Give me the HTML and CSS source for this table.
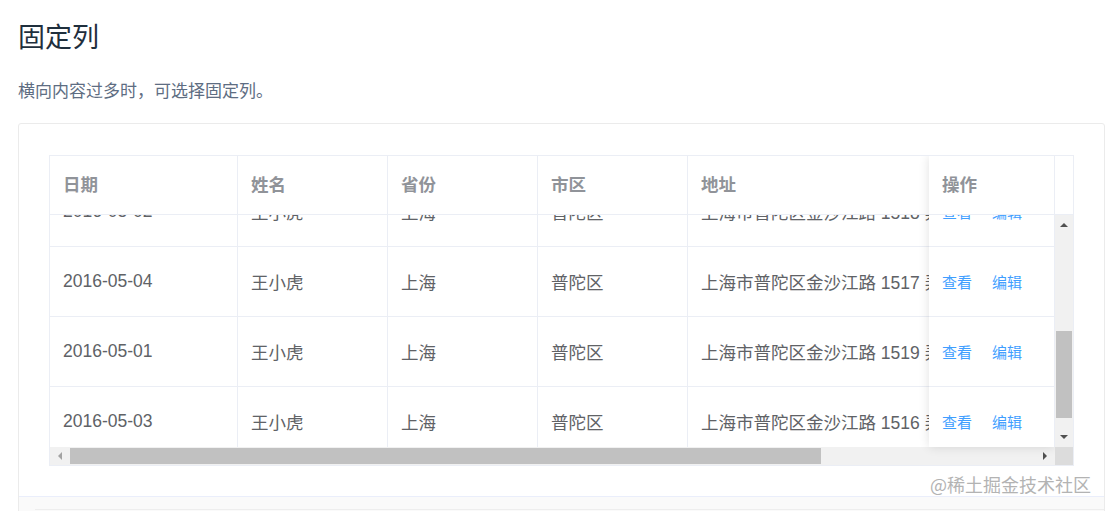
FILE: index.html
```html
<!DOCTYPE html>
<html lang="zh-CN">

<head>
    <meta charset="UTF-8">
    <meta name="viewport" content="width=device-width, initial-scale=1.0">
    <title>固定列</title>
    <link rel="stylesheet" href="styles.css">
</head>

<body>

    <div class="page">
        <h3 class="title">固定列</h3>
        <p class="desc">横向内容过多时，可选择固定列。</p>

        <div class="demo">
            <div class="demo-source">
                <div class="table">
                    <div class="thead">
                        <div class="thead-view">
                            <div class="th c-date">日期</div>
                            <div class="th c-name">姓名</div>
                            <div class="th c-prov">省份</div>
                            <div class="th c-city">市区</div>
                            <div class="th c-addr">地址</div>
                            <div class="th c-zip"></div>
                            <div class="th c-op"></div>
                        </div>
                        <div class="gutter"></div>
                    </div>

                    <div class="tbody">
                        <div class="tbody-view">
                            <div class="rows">
                                <div class="tr">
                                    <div class="td c-date">2016-05-02</div>
                                    <div class="td c-name">王小虎</div>
                                    <div class="td c-prov">上海</div>
                                    <div class="td c-city">普陀区</div>
                                    <div class="td c-addr">上海市普陀区金沙江路 1518 弄</div>
                                    <div class="td c-zip"></div>
                                    <div class="td c-op"></div>
                                </div>
                                <div class="tr">
                                    <div class="td c-date">2016-05-04</div>
                                    <div class="td c-name">王小虎</div>
                                    <div class="td c-prov">上海</div>
                                    <div class="td c-city">普陀区</div>
                                    <div class="td c-addr">上海市普陀区金沙江路 1517 弄</div>
                                    <div class="td c-zip"></div>
                                    <div class="td c-op"></div>
                                </div>
                                <div class="tr">
                                    <div class="td c-date">2016-05-01</div>
                                    <div class="td c-name">王小虎</div>
                                    <div class="td c-prov">上海</div>
                                    <div class="td c-city">普陀区</div>
                                    <div class="td c-addr">上海市普陀区金沙江路 1519 弄</div>
                                    <div class="td c-zip"></div>
                                    <div class="td c-op"></div>
                                </div>
                                <div class="tr">
                                    <div class="td c-date">2016-05-03</div>
                                    <div class="td c-name">王小虎</div>
                                    <div class="td c-prov">上海</div>
                                    <div class="td c-city">普陀区</div>
                                    <div class="td c-addr">上海市普陀区金沙江路 1516 弄</div>
                                    <div class="td c-zip"></div>
                                    <div class="td c-op"></div>
                                </div>
                            </div>
                        </div>
                        <div class="vscroll">
                            <div class="sb-btn"><span class="arrow-up"></span></div>
                            <div class="vtrack"><div class="vthumb"></div></div>
                            <div class="sb-btn"><span class="arrow-down"></span></div>
                        </div>
                    </div>

                    <div class="hbar">
                        <div class="hscroll">
                            <div class="sb-btn"><span class="arrow-left"></span></div>
                            <div class="htrack"><div class="hthumb"></div></div>
                            <div class="sb-btn"><span class="arrow-right"></span></div>
                        </div>
                        <div class="corner"></div>
                    </div>

                    <!-- fixed right column -->
                    <div class="fixed">
                        <div class="fixed-head">
                            <div class="th c-op">操作</div>
                        </div>
                        <div class="fixed-body">
                            <div class="rows">
                                <div class="tr">
                                    <div class="td c-op"><a class="link">查看</a><a class="link">编辑</a></div>
                                </div>
                                <div class="tr">
                                    <div class="td c-op"><a class="link">查看</a><a class="link">编辑</a></div>
                                </div>
                                <div class="tr">
                                    <div class="td c-op"><a class="link">查看</a><a class="link">编辑</a></div>
                                </div>
                                <div class="tr">
                                    <div class="td c-op"><a class="link">查看</a><a class="link">编辑</a></div>
                                </div>
                            </div>
                        </div>
                    </div>
                </div>
            </div>
            <div class="demo-meta">
                <div class="meta-line"></div>
            </div>
        </div>
    </div>

    <div class="watermark">@稀土掘金技术社区</div>

</body>

</html>
```

FILE: styles.css
```css
* {
    box-sizing: border-box;
}

html,
body {
    margin: 0;
    padding: 0;
    background: #fff;
}

body {
    position: relative;
    font-family: "Liberation Sans", "Noto Sans CJK SC", sans-serif;
    overflow: hidden;
}

.page {
    padding: 18px 0 0 18px;
    width: 1105px;
}

.title {
    margin: 0;
    font-size: 27px;
    font-weight: normal;
    line-height: 40px;
    color: #1f2f3d;
}

.desc {
    margin: 21px 0 0 0;
    font-size: 17px;
    line-height: 25px;
    color: #5e6d82;
}

.demo {
    margin-top: 19px;
    border: 1px solid #ebebeb;
    border-radius: 3px;
}

.demo-source {
    padding: 31px 30px 30px;
}

.demo-meta {
    border-top: 1px solid #eaeefb;
    background: #fafafa;
    height: 30px;
    padding: 12px 0 0 16px;
}

.meta-line {
    border-top: 1px solid #eeeeee;
}

/* table */
.table {
    position: relative;
    width: 1025px;
    border: 1px solid #ebeef5;
    font-size: 17.5px;
    color: #606266;
}

.thead {
    display: flex;
    height: 59px;
    border-bottom: 1px solid #ebeef5;
}

.thead-view,
.tbody-view {
    width: 1005px;
    overflow: hidden;
}

.thead-view {
    display: flex;
}

.gutter {
    width: 18px;
    background: #fff;
}

.th,
.td {
    flex: none;
    display: flex;
    align-items: center;
    padding-left: 13px;
    border-right: 1px solid #ebeef5;
    white-space: nowrap;
    overflow: hidden;
}

.th {
    padding-bottom: 4px;
    font-weight: bold;
    color: #909399;
}

.c-date { width: 188px; }
.c-name { width: 150px; }
.c-prov { width: 150px; }
.c-city { width: 150px; }
.c-addr { width: 375px; }
.c-zip { width: 150px; }
.c-op { width: 126px; }

.tbody {
    display: flex;
    height: 232px;
}

.rows {
    margin-top: -38px;
}

.tr {
    display: flex;
    height: 70px;
    border-bottom: 1px solid #ebeef5;
}

.link {
    color: #409eff;
    font-size: 15px;
    cursor: pointer;
}

.link + .link {
    margin-left: 20px;
}

/* fixed column */
.fixed {
    position: absolute;
    top: 0;
    right: 18px;
    width: 126px;
    height: 291px;
    background: #fff;
    box-shadow: 0 0 10px rgba(0, 0, 0, .12);
    clip-path: inset(0 0 -20px -20px);
}

.fixed-head {
    display: flex;
    height: 59px;
    border-bottom: 1px solid #ebeef5;
}

.fixed-body {
    height: 232px;
    overflow: hidden;
}

/* scrollbars */
.vscroll {
    width: 18px;
    display: flex;
    flex-direction: column;
    background: #f1f1f1;
}

.vtrack {
    flex: 1;
    padding: 96px 1px 0;
}

.vthumb {
    height: 87px;
    background: #c1c1c1;
}

.hbar {
    display: flex;
    height: 18px;
}

.hscroll {
    width: 1005px;
    display: flex;
    background: #f1f1f1;
}

.htrack {
    flex: 1;
    padding: 1px 0 1px 0;
}

.hthumb {
    width: 751px;
    height: 16px;
    background: #c1c1c1;
}

.corner {
    width: 18px;
    background: #dcdcdc;
}

.sb-btn {
    flex: none;
    width: 20px;
    height: 20px;
    display: flex;
    align-items: center;
    justify-content: center;
}

.vscroll .sb-btn {
    width: 18px;
}

.hscroll .sb-btn {
    height: 18px;
}

.arrow-up,
.arrow-down {
    width: 0;
    height: 0;
    border-left: 4px solid transparent;
    border-right: 4px solid transparent;
}

.arrow-up {
    border-bottom: 4px solid #505050;
}

.arrow-down {
    border-top: 4px solid #505050;
}

.arrow-left,
.arrow-right {
    width: 0;
    height: 0;
    border-top: 4px solid transparent;
    border-bottom: 4px solid transparent;
}

.arrow-left {
    border-right: 4px solid #a3a3a3;
}

.arrow-right {
    border-left: 4px solid #505050;
}

.watermark {
    position: absolute;
    right: 17px;
    top: 472px;
    font-size: 18px;
    line-height: 24px;
    color: #b3b3b3;
    font-family: "Noto Sans CJK SC", sans-serif;
}
```
